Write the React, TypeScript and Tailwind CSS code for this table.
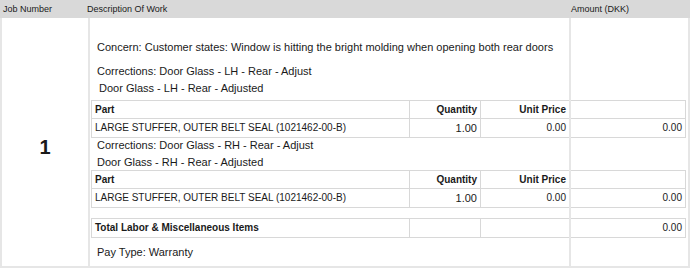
import React from "react";

// Work order line: job header, description column and amount column.
const cellBorder = "border border-[#d8d8d8]";

type PartRow = { part: string; qty: string; unit: string; amount: string };

function Cols() {
    return (
        <colgroup>
            <col className="w-[318px]" />
            <col className="w-[71px]" />
            <col className="w-[89px]" />
            <col className="w-[116px]" />
        </colgroup>
    );
}

function PartsTable({ row }: { row: PartRow }) {
    return (
        <table className="w-[594px] table-fixed border-collapse text-[10px] leading-[12px] text-[#1a1a1a]">
            <Cols />
            <tbody>
                <tr className="h-[18px] font-bold">
                    <td className={`${cellBorder} px-[3px]`}>Part</td>
                    <td className={`${cellBorder} px-[3px] text-right`}>Quantity</td>
                    <td className={`${cellBorder} px-[3px] text-right`}>Unit Price</td>
                    <td className={cellBorder} />
                </tr>
                <tr className="h-[19px]">
                    <td className={`${cellBorder} px-[3px]`}>{row.part}</td>
                    <td className={`${cellBorder} px-[3px] text-right text-[11px]`}>{row.qty}</td>
                    <td className={`${cellBorder} px-[3px] text-right`}>{row.unit}</td>
                    <td className={`${cellBorder} px-[3px] text-right`}>{row.amount}</td>
                </tr>
            </tbody>
        </table>
    );
}

function TotalTable() {
    return (
        <table className="w-[594px] table-fixed border-collapse text-[10px] leading-[12px] text-[#1a1a1a]">
            <Cols />
            <tbody>
                <tr className="h-[19px]">
                    <td className={`${cellBorder} px-[3px] font-bold`}>Total Labor &amp; Miscellaneous Items</td>
                    <td className={cellBorder} />
                    <td className={cellBorder} />
                    <td className={`${cellBorder} px-[3px] text-right`}>0.00</td>
                </tr>
            </tbody>
        </table>
    );
}

const stuffer: PartRow = {
    part: "LARGE STUFFER, OUTER BELT SEAL (1021462-00-B)",
    qty: "1.00",
    unit: "0.00",
    amount: "0.00",
};

export default function App() {
    return (
        <div className="w-[695px] h-[271px] bg-white font-[family-name:'Liberation_Sans',Arial,sans-serif] text-[#1a1a1a]">
            <div className="w-[690px]">
                {/* Header */}
                <div className="grid grid-cols-[86px_481px_123px] h-[18px] bg-[#d9d9d9] text-[9px] leading-[18px]">
                    <div className="pl-[3px]">Job Number</div>
                    <div className="pl-[1px]">Description Of Work</div>
                    <div className="pl-[4px]">Amount (DKK)</div>
                </div>

                {/* Body */}
                <div className="grid grid-cols-[86px_481px_123px] h-[250px] border-x-2 border-b-2 border-[#e6e6e6]">
                    <div className="flex items-center justify-center pt-[10px] text-[20px] font-bold">1</div>

                    <div className="border-l-2 border-[#e6e6e6] pl-[1px] pt-[21px] text-[11px] leading-[16px]">
                        <p className="pl-[6px] whitespace-nowrap">
                            Concern: Customer states: Window is hitting the bright molding when opening both rear doors
                        </p>
                        <p className="pl-[6px] mt-[8px]">Corrections: Door Glass - LH - Rear - Adjust</p>
                        <p className="pl-[8px] mt-[1px]">Door Glass - LH - Rear - Adjusted</p>
                        <div className="mt-[4px]">
                            <PartsTable row={stuffer} />
                        </div>
                        <p className="pl-[6px] -mt-[1px]">Corrections: Door Glass - RH - Rear - Adjust</p>
                        <p className="pl-[6px] mt-[1px]">Door Glass - RH - Rear - Adjusted</p>
                        <div>
                            <PartsTable row={stuffer} />
                        </div>
                        <div className="mt-[10px]">
                            <TotalTable />
                        </div>
                        <p className="pl-[6px] mt-[6px]">Pay Type: Warranty</p>
                    </div>

                    <div className="border-l-2 border-[#e6e6e6]" />
                </div>
            </div>
        </div>
    );
}
